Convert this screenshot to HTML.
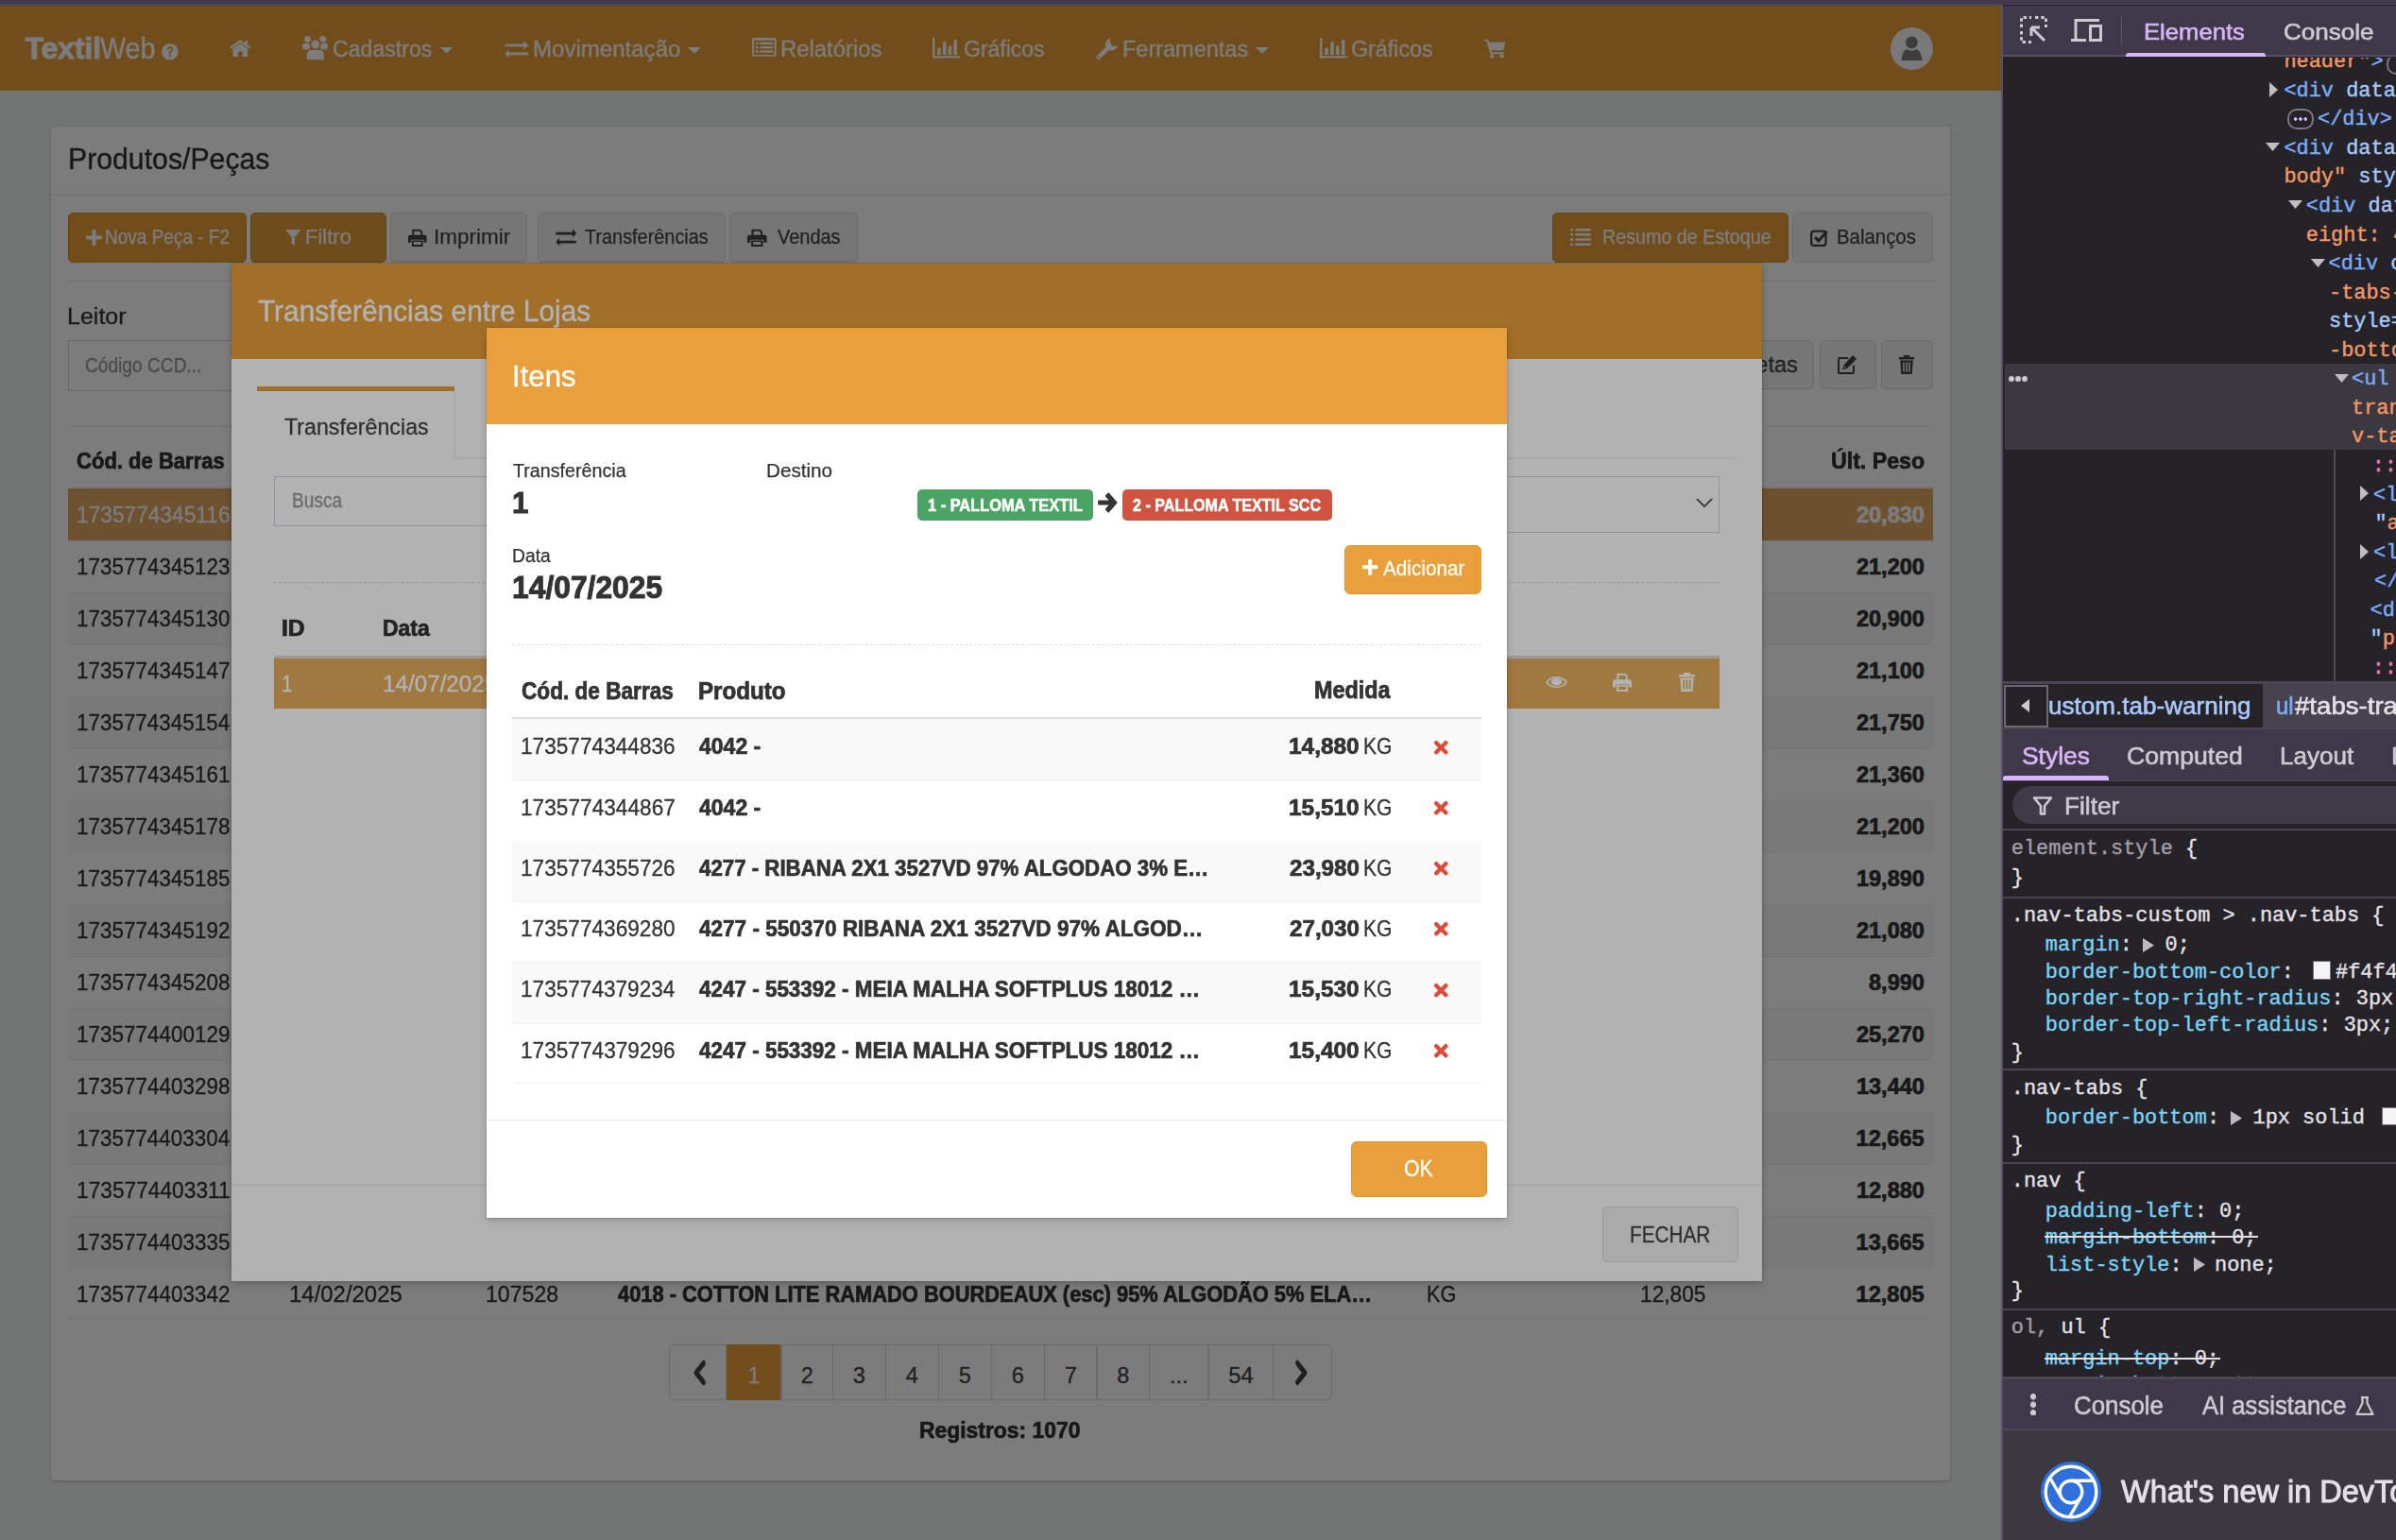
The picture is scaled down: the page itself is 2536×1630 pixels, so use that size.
<!DOCTYPE html>
<html><head><meta charset="utf-8"><style>
html,body{margin:0;padding:0;width:2536px;height:1630px;overflow:hidden;background:#262429;}
.t{position:absolute;white-space:pre;}
.m{position:absolute;white-space:pre;font-family:'Liberation Mono',monospace;font-size:21.93px;line-height:22px;-webkit-text-stroke:0.4px currentColor;}
svg{position:absolute;overflow:visible;}

</style></head><body>
<div style="position:absolute;left:0;top:0;width:2118px;height:1630px;overflow:hidden;background:#edeef0;">
<div style="position:absolute;left:0px;top:6px;width:2118px;height:90px;background:#e9a03c;"></div>
<div class="t" style="left:26.74px;top:35.67px;font-size:31.69px;line-height:31.69px;font-family:'Liberation Sans', sans-serif;font-weight:700;color:#fff;-webkit-text-stroke:0.95px #fff;">Textil</div>
<div class="t" style="left:105.87px;top:35.67px;font-size:31.69px;line-height:31.69px;font-family:'Liberation Sans', sans-serif;font-weight:400;color:#fff;transform:scaleX(0.9046);transform-origin:0 0;-webkit-text-stroke:0.38px #fff;">Web</div>
<svg style="left:171px;top:45.8px;" width="17.7" height="17.6" viewBox="0 0 100 100" preserveAspectRatio="none" fill="#fff"><circle cx="50" cy="50" r="50"/><path d="M34 38Q34 18 52 18Q70 18 70 36Q70 46 58 52Q55 54 55 62H44Q44 48 54 43Q60 40 60 36Q60 28 52 28Q44 28 44 38Z" fill="#e9a03c"/><rect x="44" y="68" width="12" height="12" fill="#e9a03c"/></svg>
<svg style="left:242.8px;top:42px;" width="22.7" height="18" viewBox="0 0 100 100" preserveAspectRatio="none" fill="#fff"><path d="M50 0L100 45L92 54L50 16L8 54L0 45Z"/><path d="M16 52L50 22L84 52V100H60V70H40V100H16Z"/><rect x="72" y="6" width="12" height="26"/></svg>
<svg style="left:320px;top:38.2px;" width="27" height="25.4" viewBox="0 0 100 100" preserveAspectRatio="none" fill="#fff"><rect x="0.4" y="30.7" width="29.6" height="26.3" rx="11"/><rect x="70" y="30.7" width="29.3" height="26.3" rx="11"/><ellipse cx="20.4" cy="13.6" rx="12.6" ry="13.4"/><ellipse cx="80.7" cy="13.6" rx="12.6" ry="13.4"/><path d="M15.2 102V78Q15.2 56 37 56H65Q87 56 87 78V102Z" stroke="#e9a03c" stroke-width="5"/><ellipse cx="51.1" cy="35.8" rx="19.5" ry="20.7" stroke="#e9a03c" stroke-width="6"/></svg>
<div class="t" style="left:352.33px;top:39.72px;font-size:24.42px;line-height:24.42px;font-family:'Liberation Sans', sans-serif;font-weight:400;color:#fff;transform:scaleX(0.9467);transform-origin:0 0;-webkit-text-stroke:0.29px #fff;">Cadastros</div>
<svg style="left:466.3px;top:49.9px;" width="13.2" height="6.8" viewBox="0 0 100 100" preserveAspectRatio="none" fill="#fff"><path d="M0 0H100L50 100Z"/></svg>
<svg style="left:533.8px;top:42.5px;" width="25.3" height="18.7" viewBox="0 0 100 100" preserveAspectRatio="none" fill="#fff"><path d="M1.6 19.3H80.6V0L100 26.2L80.6 49.7V33.7H1.6Z"/><path d="M98.4 67.4H19V49.7L1.6 74.3L19 98.4V81.8H98.4Z"/></svg>
<div class="t" style="left:563.53px;top:39.72px;font-size:24.42px;line-height:24.42px;font-family:'Liberation Sans', sans-serif;font-weight:400;color:#fff;transform:scaleX(0.9853);transform-origin:0 0;-webkit-text-stroke:0.29px #fff;">Movimentação</div>
<svg style="left:728px;top:49.5px;" width="13.7" height="7.1" viewBox="0 0 100 100" preserveAspectRatio="none" fill="#fff"><path d="M0 0H100L50 100Z"/></svg>
<svg style="left:796px;top:40.1px;" width="25.6" height="19.65" viewBox="0 0 100 100" preserveAspectRatio="none" fill="#fff"><path d="M0 8Q0 0 8 0H92Q100 0 100 8V92Q100 100 92 100H8Q0 100 0 92Z M8 14V92H92V14Z" fill-rule="evenodd"/><rect x="14" y="24" width="12" height="12"/><rect x="32" y="24" width="54" height="12"/><rect x="14" y="46" width="12" height="12"/><rect x="32" y="46" width="54" height="12"/><rect x="14" y="68" width="12" height="12"/><rect x="32" y="68" width="54" height="12"/></svg>
<div class="t" style="left:825.64px;top:39.72px;font-size:24.42px;line-height:24.42px;font-family:'Liberation Sans', sans-serif;font-weight:400;color:#fff;transform:scaleX(0.9785);transform-origin:0 0;-webkit-text-stroke:0.29px #fff;">Relatórios</div>
<svg style="left:986.6px;top:40.1px;" width="28.8" height="21.4" viewBox="0 0 100 100" preserveAspectRatio="none" fill="#fff"><rect x="0" y="0" width="8" height="100"/><rect x="0" y="90" width="100" height="10"/><rect x="18" y="50" width="12" height="34"/><rect x="38" y="20" width="12" height="64"/><rect x="58" y="40" width="12" height="44"/><rect x="78" y="10" width="12" height="74"/></svg>
<div class="t" style="left:1020.14px;top:39.72px;font-size:24.42px;line-height:24.42px;font-family:'Liberation Sans', sans-serif;font-weight:400;color:#fff;transform:scaleX(0.9418);transform-origin:0 0;-webkit-text-stroke:0.29px #fff;">Gráficos</div>
<svg style="left:1159.6px;top:40.1px;" width="23.5" height="23.3" viewBox="0 0 100 100" preserveAspectRatio="none" fill="#fff"><defs><mask id="wm"><rect x="0" y="0" width="100" height="100" fill="#fff"/><path d="M70 -10L110 -10L110 30L80 40L62 22Z" fill="#000"/></mask></defs><g mask="url(#wm)"><circle cx="70" cy="30" r="28"/></g><path d="M12 88L58 42" stroke="#fff" stroke-width="20" stroke-linecap="round"/><circle cx="13" cy="87" r="4" fill="#e9a03c"/></svg>
<div class="t" style="left:1187.57px;top:39.72px;font-size:24.42px;line-height:24.42px;font-family:'Liberation Sans', sans-serif;font-weight:400;color:#fff;transform:scaleX(0.9625);transform-origin:0 0;-webkit-text-stroke:0.29px #fff;">Ferramentas</div>
<svg style="left:1328.7px;top:49.5px;" width="13.9" height="7.1" viewBox="0 0 100 100" preserveAspectRatio="none" fill="#fff"><path d="M0 0H100L50 100Z"/></svg>
<svg style="left:1396.8px;top:40.1px;" width="29.4" height="21.4" viewBox="0 0 100 100" preserveAspectRatio="none" fill="#fff"><rect x="0" y="0" width="8" height="100"/><rect x="0" y="90" width="100" height="10"/><rect x="18" y="50" width="12" height="34"/><rect x="38" y="20" width="12" height="64"/><rect x="58" y="40" width="12" height="44"/><rect x="78" y="10" width="12" height="74"/></svg>
<div class="t" style="left:1430.33px;top:39.72px;font-size:24.42px;line-height:24.42px;font-family:'Liberation Sans', sans-serif;font-weight:400;color:#fff;transform:scaleX(0.9542);transform-origin:0 0;-webkit-text-stroke:0.29px #fff;">Gráficos</div>
<svg style="left:1571px;top:42px;" width="22.7" height="19.5" viewBox="0 0 100 100" preserveAspectRatio="none" fill="#fff"><path d="M0 0H18L24 14H100L88 58H32L36 68H92V78H28L10 8H0Z"/><circle cx="36" cy="90" r="10"/><circle cx="82" cy="90" r="10"/></svg>
<svg style="left:2001px;top:29px" width="45" height="45" viewBox="0 0 45 45"><circle cx="22.5" cy="22.5" r="22.5" fill="#fafafa"/><path d="M11.4 34.9C12 29 14 24.5 17 23.1Q22.4 26.5 27.8 23.1C31 24.5 33 29 33.7 34.9Z" fill="#847c82"/><circle cx="22.4" cy="15.9" r="7.6" fill="#fafafa"/><circle cx="22.4" cy="15.9" r="6.4" fill="#847c82"/></svg>
<div style="position:absolute;left:54px;top:134px;width:2010px;height:1433px;background:#fff;border-radius:4px;box-shadow:0 1px 3px rgba(0,0,0,0.22);"></div>
<div style="position:absolute;left:54px;top:205px;width:2010px;height:2px;background:#f4f4f4;"></div>
<div class="t" style="left:72.02px;top:152.79px;font-size:31.54px;line-height:31.54px;font-family:'Liberation Sans', sans-serif;font-weight:400;color:#333;transform:scaleX(0.9590);transform-origin:0 0;-webkit-text-stroke:0.38px #333;">Produtos/Peças</div>
<div style="position:absolute;left:72px;top:225px;width:189px;height:53px;background:#e9a03c;box-sizing:border-box;border:1.5px solid #d9902c;border-radius:5px;"></div>
<svg style="left:90.7px;top:242.5px;" width="16.9" height="17" viewBox="0 0 100 100" preserveAspectRatio="none" fill="#fff"><rect x="38" y="0" width="24" height="100" rx="4"/><rect x="0" y="38" width="100" height="24" rx="4"/></svg>
<div class="t" style="left:110.94px;top:240.43px;font-size:21.22px;line-height:21.22px;font-family:'Liberation Sans', sans-serif;font-weight:400;color:#fff;transform:scaleX(0.8955);transform-origin:0 0;-webkit-text-stroke:0.25px #fff;">Nova Peça - F2</div>
<div style="position:absolute;left:265px;top:225px;width:144px;height:53px;background:#e59c38;box-sizing:border-box;border:1.5px solid #cf8c2c;border-radius:5px;"></div>
<svg style="left:302px;top:243px;" width="16.7" height="17" viewBox="0 0 100 100" preserveAspectRatio="none" fill="#fff"><path d="M0 0H100L60 48V100L40 85V48Z"/></svg>
<div class="t" style="left:322.59px;top:240.43px;font-size:21.22px;line-height:21.22px;font-family:'Liberation Sans', sans-serif;font-weight:400;color:#fff;transform:scaleX(1.0376);transform-origin:0 0;-webkit-text-stroke:0.25px #fff;">Filtro</div>
<div style="position:absolute;left:413px;top:225px;width:145px;height:53px;background:#f4f4f4;box-sizing:border-box;border:1.5px solid #ddd;border-radius:5px;"></div>
<svg style="left:431.8px;top:242px;" width="19.5" height="19" viewBox="0 0 100 100" preserveAspectRatio="none" fill="#444"><path d="M22 4H66L78 16V40H68V20L62 14H32V40H22Z"/><path d="M0 46Q0 36 10 36H90Q100 36 100 46V78H84V62H16V78H0Z"/><path d="M20 66H80V100H20Z M30 74V90H70V74Z" fill-rule="evenodd"/></svg>
<div class="t" style="left:458.62px;top:240.43px;font-size:21.22px;line-height:21.22px;font-family:'Liberation Sans', sans-serif;font-weight:400;color:#444;transform:scaleX(1.0619);transform-origin:0 0;-webkit-text-stroke:0.25px #444;">Imprimir</div>
<div style="position:absolute;left:569px;top:225px;width:199px;height:53px;background:#f4f4f4;box-sizing:border-box;border:1.5px solid #ddd;border-radius:5px;"></div>
<svg style="left:587.7px;top:242px;" width="22.2" height="19" viewBox="0 0 100 100" preserveAspectRatio="none" fill="#444"><path d="M1.6 19.3H80.6V0L100 26.2L80.6 49.7V33.7H1.6Z"/><path d="M98.4 67.4H19V49.7L1.6 74.3L19 98.4V81.8H98.4Z"/></svg>
<div class="t" style="left:619.15px;top:240.43px;font-size:21.22px;line-height:21.22px;font-family:'Liberation Sans', sans-serif;font-weight:400;color:#444;transform:scaleX(0.9370);transform-origin:0 0;-webkit-text-stroke:0.25px #444;">Transferências</div>
<div style="position:absolute;left:772px;top:225px;width:136px;height:53px;background:#f4f4f4;box-sizing:border-box;border:1.5px solid #ddd;border-radius:5px;"></div>
<svg style="left:790.6px;top:242px;" width="20.6" height="19" viewBox="0 0 100 100" preserveAspectRatio="none" fill="#444"><path d="M22 4H66L78 16V40H68V20L62 14H32V40H22Z"/><path d="M0 46Q0 36 10 36H90Q100 36 100 46V78H84V62H16V78H0Z"/><path d="M20 66H80V100H20Z M30 74V90H70V74Z" fill-rule="evenodd"/></svg>
<div class="t" style="left:823.11px;top:240.43px;font-size:21.22px;line-height:21.22px;font-family:'Liberation Sans', sans-serif;font-weight:400;color:#444;transform:scaleX(0.9408);transform-origin:0 0;-webkit-text-stroke:0.25px #444;">Vendas</div>
<div style="position:absolute;left:1643px;top:225px;width:250px;height:53px;background:#e9a03c;box-sizing:border-box;border:1.5px solid #d9902c;border-radius:5px;"></div>
<svg style="left:1662.2px;top:242px;" width="21.8" height="18" viewBox="0 0 100 100" preserveAspectRatio="none" fill="#fff"><rect x="0" y="0" width="14" height="14"/><rect x="24" y="0" width="76" height="14"/><rect x="0" y="28" width="14" height="14"/><rect x="24" y="28" width="76" height="14"/><rect x="0" y="57" width="14" height="14"/><rect x="24" y="57" width="76" height="14"/><rect x="0" y="86" width="14" height="14"/><rect x="24" y="86" width="76" height="14"/></svg>
<div class="t" style="left:1696.28px;top:240.43px;font-size:21.22px;line-height:21.22px;font-family:'Liberation Sans', sans-serif;font-weight:400;color:#fff;transform:scaleX(0.9289);transform-origin:0 0;-webkit-text-stroke:0.25px #fff;">Resumo de Estoque</div>
<div style="position:absolute;left:1897px;top:225px;width:149px;height:53px;background:#f4f4f4;box-sizing:border-box;border:1.5px solid #ddd;border-radius:5px;"></div>
<svg style="left:1915.8px;top:242px;" width="19.2" height="19" viewBox="0 0 100 100" preserveAspectRatio="none" fill="#444"><rect x="6" y="14" width="80" height="80" rx="14" fill="none" stroke="#444" stroke-width="12"/><path d="M26 48L46 68L92 14" fill="none" stroke="#444" stroke-width="16" stroke-linejoin="miter"/></svg>
<div class="t" style="left:1943.63px;top:240.43px;font-size:21.22px;line-height:21.22px;font-family:'Liberation Sans', sans-serif;font-weight:400;color:#444;transform:scaleX(0.9612);transform-origin:0 0;-webkit-text-stroke:0.25px #444;">Balanços</div>
<div style="position:absolute;left:72px;top:296px;width:1974px;height:1.5px;background:#f4f4f4;"></div>
<div class="t" style="left:70.95px;top:322.69px;font-size:23.98px;line-height:23.98px;font-family:'Liberation Sans', sans-serif;font-weight:400;color:#333;transform:scaleX(1.0444);transform-origin:0 0;-webkit-text-stroke:0.29px #333;">Leitor</div>
<div style="position:absolute;left:72px;top:360px;width:1428px;height:54px;background:#fff;box-sizing:border-box;border:1.5px solid #d2d6de;"></div>
<div class="t" style="left:90.03px;top:375.48px;font-size:22.82px;line-height:22.82px;font-family:'Liberation Sans', sans-serif;font-weight:400;color:#999;transform:scaleX(0.8392);transform-origin:0 0;-webkit-text-stroke:0.27px #999;">Código CCD...</div>
<div style="position:absolute;left:1700px;top:360px;width:220px;height:51.5px;background:#f4f4f4;box-sizing:border-box;border:1.5px solid #ddd;border-radius:5px;"></div>
<div class="t" style="left:1804.66px;top:374.66px;font-size:23.55px;line-height:23.55px;font-family:'Liberation Sans', sans-serif;font-weight:400;color:#444;-webkit-text-stroke:0.28px #444;">Etiquetas</div>
<div style="position:absolute;left:1926px;top:360px;width:59.5px;height:51.5px;background:#f4f4f4;box-sizing:border-box;border:1.5px solid #ddd;border-radius:5px;"></div>
<svg style="left:1945px;top:376px;" width="20" height="20" viewBox="0 0 100 100" preserveAspectRatio="none" fill="#444"><path d="M0 20Q0 10 10 10H56V20H10V90H80V54H90V90Q90 100 80 100H10Q0 100 0 90Z"/><path d="M80 0L100 20L50 70L26 76L32 52Z M36 56L32 68L44 64Z" fill-rule="evenodd"/></svg>
<div style="position:absolute;left:1991px;top:360px;width:54.5px;height:51.5px;background:#f4f4f4;box-sizing:border-box;border:1.5px solid #ddd;border-radius:5px;"></div>
<svg style="left:2010px;top:376px;" width="16" height="20" viewBox="0 0 100 100" preserveAspectRatio="none" fill="#444"><path d="M30 0H70V10H100V22H0V10H30Z"/><path d="M8 28H92L86 100H14Z M26 38V88H36V38Z M45 38V88H55V38Z M64 38V88H74V38Z" fill-rule="evenodd"/></svg>
<div style="position:absolute;left:72px;top:450px;width:1974px;height:1.5px;background:#f4f4f4;"></div>
<div class="t" style="left:80.90px;top:476.08px;font-size:24.71px;line-height:24.71px;font-family:'Liberation Sans', sans-serif;font-weight:700;color:#333;transform:scaleX(0.8923);transform-origin:0 0;-webkit-text-stroke:0.74px #333;">Cód. de Barras</div>
<div class="t" style="left:1937.81px;top:476.08px;font-size:24.71px;line-height:24.71px;font-family:'Liberation Sans', sans-serif;font-weight:700;color:#333;transform:scaleX(0.9375);transform-origin:0 0;-webkit-text-stroke:0.74px #333;">Últ. Peso</div>
<div style="position:absolute;left:72px;top:515px;width:1974px;height:2px;background:#f4f4f4;"></div>
<div style="position:absolute;left:72px;top:517px;width:1974px;height:55px;background:#e2a762;"></div>
<div class="t" style="left:80.97px;top:534.16px;font-size:23.55px;line-height:23.55px;font-family:'Liberation Sans', sans-serif;font-weight:400;color:#fff;transform:scaleX(0.9646);transform-origin:0 0;-webkit-text-stroke:0.28px #fff;">1735774345116</div>
<div class="t" style="left:1964.93px;top:534.16px;font-size:23.55px;line-height:23.55px;font-family:'Liberation Sans', sans-serif;font-weight:700;color:#fff;-webkit-text-stroke:0.71px #fff;">20,830</div>
<div style="position:absolute;left:72px;top:572px;width:1974px;height:1px;background:#f4f4f4;"></div>
<div class="t" style="left:80.99px;top:589.16px;font-size:23.55px;line-height:23.55px;font-family:'Liberation Sans', sans-serif;font-weight:400;color:#333;transform:scaleX(0.9545);transform-origin:0 0;-webkit-text-stroke:0.28px #333;">1735774345123</div>
<div class="t" style="left:1964.93px;top:589.16px;font-size:23.55px;line-height:23.55px;font-family:'Liberation Sans', sans-serif;font-weight:700;color:#333;-webkit-text-stroke:0.71px #333;">21,200</div>
<div style="position:absolute;left:72px;top:627px;width:1974px;height:55px;background:#f9f9f9;"></div>
<div style="position:absolute;left:72px;top:627px;width:1974px;height:1px;background:#f4f4f4;"></div>
<div class="t" style="left:80.99px;top:644.16px;font-size:23.55px;line-height:23.55px;font-family:'Liberation Sans', sans-serif;font-weight:400;color:#333;transform:scaleX(0.9538);transform-origin:0 0;-webkit-text-stroke:0.28px #333;">1735774345130</div>
<div class="t" style="left:1964.93px;top:644.16px;font-size:23.55px;line-height:23.55px;font-family:'Liberation Sans', sans-serif;font-weight:700;color:#333;-webkit-text-stroke:0.71px #333;">20,900</div>
<div style="position:absolute;left:72px;top:682px;width:1974px;height:1px;background:#f4f4f4;"></div>
<div class="t" style="left:80.99px;top:699.16px;font-size:23.55px;line-height:23.55px;font-family:'Liberation Sans', sans-serif;font-weight:400;color:#333;transform:scaleX(0.9553);transform-origin:0 0;-webkit-text-stroke:0.28px #333;">1735774345147</div>
<div class="t" style="left:1964.93px;top:699.16px;font-size:23.55px;line-height:23.55px;font-family:'Liberation Sans', sans-serif;font-weight:700;color:#333;-webkit-text-stroke:0.71px #333;">21,100</div>
<div style="position:absolute;left:72px;top:737px;width:1974px;height:55px;background:#f9f9f9;"></div>
<div style="position:absolute;left:72px;top:737px;width:1974px;height:1px;background:#f4f4f4;"></div>
<div class="t" style="left:80.99px;top:754.16px;font-size:23.55px;line-height:23.55px;font-family:'Liberation Sans', sans-serif;font-weight:400;color:#333;transform:scaleX(0.9525);transform-origin:0 0;-webkit-text-stroke:0.28px #333;">1735774345154</div>
<div class="t" style="left:1964.93px;top:754.16px;font-size:23.55px;line-height:23.55px;font-family:'Liberation Sans', sans-serif;font-weight:700;color:#333;-webkit-text-stroke:0.71px #333;">21,750</div>
<div style="position:absolute;left:72px;top:792px;width:1974px;height:1px;background:#f4f4f4;"></div>
<div class="t" style="left:80.99px;top:809.16px;font-size:23.55px;line-height:23.55px;font-family:'Liberation Sans', sans-serif;font-weight:400;color:#333;transform:scaleX(0.9551);transform-origin:0 0;-webkit-text-stroke:0.28px #333;">1735774345161</div>
<div class="t" style="left:1964.93px;top:809.16px;font-size:23.55px;line-height:23.55px;font-family:'Liberation Sans', sans-serif;font-weight:700;color:#333;-webkit-text-stroke:0.71px #333;">21,360</div>
<div style="position:absolute;left:72px;top:847px;width:1974px;height:55px;background:#f9f9f9;"></div>
<div style="position:absolute;left:72px;top:847px;width:1974px;height:1px;background:#f4f4f4;"></div>
<div class="t" style="left:80.99px;top:864.16px;font-size:23.55px;line-height:23.55px;font-family:'Liberation Sans', sans-serif;font-weight:400;color:#333;transform:scaleX(0.9544);transform-origin:0 0;-webkit-text-stroke:0.28px #333;">1735774345178</div>
<div class="t" style="left:1964.93px;top:864.16px;font-size:23.55px;line-height:23.55px;font-family:'Liberation Sans', sans-serif;font-weight:700;color:#333;-webkit-text-stroke:0.71px #333;">21,200</div>
<div style="position:absolute;left:72px;top:902px;width:1974px;height:1px;background:#f4f4f4;"></div>
<div class="t" style="left:80.99px;top:919.16px;font-size:23.55px;line-height:23.55px;font-family:'Liberation Sans', sans-serif;font-weight:400;color:#333;transform:scaleX(0.9542);transform-origin:0 0;-webkit-text-stroke:0.28px #333;">1735774345185</div>
<div class="t" style="left:1964.93px;top:919.16px;font-size:23.55px;line-height:23.55px;font-family:'Liberation Sans', sans-serif;font-weight:700;color:#333;-webkit-text-stroke:0.71px #333;">19,890</div>
<div style="position:absolute;left:72px;top:957px;width:1974px;height:55px;background:#f9f9f9;"></div>
<div style="position:absolute;left:72px;top:957px;width:1974px;height:1px;background:#f4f4f4;"></div>
<div class="t" style="left:80.99px;top:974.16px;font-size:23.55px;line-height:23.55px;font-family:'Liberation Sans', sans-serif;font-weight:400;color:#333;transform:scaleX(0.9553);transform-origin:0 0;-webkit-text-stroke:0.28px #333;">1735774345192</div>
<div class="t" style="left:1964.93px;top:974.16px;font-size:23.55px;line-height:23.55px;font-family:'Liberation Sans', sans-serif;font-weight:700;color:#333;-webkit-text-stroke:0.71px #333;">21,080</div>
<div style="position:absolute;left:72px;top:1012px;width:1974px;height:1px;background:#f4f4f4;"></div>
<div class="t" style="left:80.99px;top:1029.16px;font-size:23.55px;line-height:23.55px;font-family:'Liberation Sans', sans-serif;font-weight:400;color:#333;transform:scaleX(0.9544);transform-origin:0 0;-webkit-text-stroke:0.28px #333;">1735774345208</div>
<div class="t" style="left:1978.03px;top:1029.16px;font-size:23.55px;line-height:23.55px;font-family:'Liberation Sans', sans-serif;font-weight:700;color:#333;-webkit-text-stroke:0.71px #333;">8,990</div>
<div style="position:absolute;left:72px;top:1067px;width:1974px;height:55px;background:#f9f9f9;"></div>
<div style="position:absolute;left:72px;top:1067px;width:1974px;height:1px;background:#f4f4f4;"></div>
<div class="t" style="left:80.99px;top:1084.16px;font-size:23.55px;line-height:23.55px;font-family:'Liberation Sans', sans-serif;font-weight:400;color:#333;transform:scaleX(0.9549);transform-origin:0 0;-webkit-text-stroke:0.28px #333;">1735774400129</div>
<div class="t" style="left:1964.93px;top:1084.16px;font-size:23.55px;line-height:23.55px;font-family:'Liberation Sans', sans-serif;font-weight:700;color:#333;-webkit-text-stroke:0.71px #333;">25,270</div>
<div style="position:absolute;left:72px;top:1122px;width:1974px;height:1px;background:#f4f4f4;"></div>
<div class="t" style="left:80.99px;top:1139.16px;font-size:23.55px;line-height:23.55px;font-family:'Liberation Sans', sans-serif;font-weight:400;color:#333;transform:scaleX(0.9544);transform-origin:0 0;-webkit-text-stroke:0.28px #333;">1735774403298</div>
<div class="t" style="left:1964.93px;top:1139.16px;font-size:23.55px;line-height:23.55px;font-family:'Liberation Sans', sans-serif;font-weight:700;color:#333;-webkit-text-stroke:0.71px #333;">13,440</div>
<div style="position:absolute;left:72px;top:1177px;width:1974px;height:55px;background:#f9f9f9;"></div>
<div style="position:absolute;left:72px;top:1177px;width:1974px;height:1px;background:#f4f4f4;"></div>
<div class="t" style="left:80.99px;top:1194.16px;font-size:23.55px;line-height:23.55px;font-family:'Liberation Sans', sans-serif;font-weight:400;color:#333;transform:scaleX(0.9525);transform-origin:0 0;-webkit-text-stroke:0.28px #333;">1735774403304</div>
<div class="t" style="left:1964.62px;top:1194.16px;font-size:23.55px;line-height:23.55px;font-family:'Liberation Sans', sans-serif;font-weight:700;color:#333;-webkit-text-stroke:0.71px #333;">12,665</div>
<div style="position:absolute;left:72px;top:1232px;width:1974px;height:1px;background:#f4f4f4;"></div>
<div class="t" style="left:80.97px;top:1249.16px;font-size:23.55px;line-height:23.55px;font-family:'Liberation Sans', sans-serif;font-weight:400;color:#333;transform:scaleX(0.9652);transform-origin:0 0;-webkit-text-stroke:0.28px #333;">1735774403311</div>
<div class="t" style="left:1964.93px;top:1249.16px;font-size:23.55px;line-height:23.55px;font-family:'Liberation Sans', sans-serif;font-weight:700;color:#333;-webkit-text-stroke:0.71px #333;">12,880</div>
<div style="position:absolute;left:72px;top:1287px;width:1974px;height:55px;background:#f9f9f9;"></div>
<div style="position:absolute;left:72px;top:1287px;width:1974px;height:1px;background:#f4f4f4;"></div>
<div class="t" style="left:80.99px;top:1304.16px;font-size:23.55px;line-height:23.55px;font-family:'Liberation Sans', sans-serif;font-weight:400;color:#333;transform:scaleX(0.9542);transform-origin:0 0;-webkit-text-stroke:0.28px #333;">1735774403335</div>
<div class="t" style="left:1964.62px;top:1304.16px;font-size:23.55px;line-height:23.55px;font-family:'Liberation Sans', sans-serif;font-weight:700;color:#333;-webkit-text-stroke:0.71px #333;">13,665</div>
<div style="position:absolute;left:72px;top:1342px;width:1974px;height:1px;background:#f4f4f4;"></div>
<div class="t" style="left:80.99px;top:1359.16px;font-size:23.55px;line-height:23.55px;font-family:'Liberation Sans', sans-serif;font-weight:400;color:#333;transform:scaleX(0.9553);transform-origin:0 0;-webkit-text-stroke:0.28px #333;">1735774403342</div>
<div class="t" style="left:1964.62px;top:1359.16px;font-size:23.55px;line-height:23.55px;font-family:'Liberation Sans', sans-serif;font-weight:700;color:#333;-webkit-text-stroke:0.71px #333;">12,805</div>
<div class="t" style="left:306.18px;top:1359.16px;font-size:23.55px;line-height:23.55px;font-family:'Liberation Sans', sans-serif;font-weight:400;color:#333;transform:scaleX(1.0167);transform-origin:0 0;-webkit-text-stroke:0.28px #333;">14/02/2025</div>
<div class="t" style="left:513.84px;top:1359.16px;font-size:23.55px;line-height:23.55px;font-family:'Liberation Sans', sans-serif;font-weight:400;color:#333;transform:scaleX(0.9820);transform-origin:0 0;-webkit-text-stroke:0.28px #333;">107528</div>
<div class="t" style="left:654.17px;top:1359.16px;font-size:23.55px;line-height:23.55px;font-family:'Liberation Sans', sans-serif;font-weight:700;color:#333;transform:scaleX(0.9284);transform-origin:0 0;-webkit-text-stroke:0.71px #333;">4018 - COTTON LITE RAMADO BOURDEAUX (esc) 95% ALGODÃO 5% ELA…</div>
<div class="t" style="left:1510.22px;top:1359.16px;font-size:23.55px;line-height:23.55px;font-family:'Liberation Sans', sans-serif;font-weight:400;color:#333;transform:scaleX(0.9229);transform-origin:0 0;-webkit-text-stroke:0.28px #333;">KG</div>
<div class="t" style="left:1735.97px;top:1359.16px;font-size:23.55px;line-height:23.55px;font-family:'Liberation Sans', sans-serif;font-weight:400;color:#333;transform:scaleX(0.9646);transform-origin:0 0;-webkit-text-stroke:0.28px #333;">12,805</div>
<div style="position:absolute;left:72px;top:1396px;width:1974px;height:1px;background:#f4f4f4;"></div>
<div style="position:absolute;left:708px;top:1423px;width:702px;height:59px;background:#fff;box-sizing:border-box;border:1.5px solid #ddd;border-radius:6px;"></div>
<svg style="left:732px;top:1441px;" width="16" height="24" viewBox="0 0 100 100" preserveAspectRatio="none" fill="#444"><path d="M80 8L30 50L80 92" stroke="#444" stroke-width="26" stroke-linecap="round" stroke-linejoin="round" fill="none"/></svg>
<div style="position:absolute;left:768.25px;top:1423px;width:1.5px;height:59px;background:#ddd;"></div>
<div style="position:absolute;left:769px;top:1423px;width:58px;height:59px;background:#e9a03c;"></div>
<div class="t" style="left:791.45px;top:1444.66px;font-size:23.55px;line-height:23.55px;font-family:'Liberation Sans', sans-serif;font-weight:400;color:#fff;-webkit-text-stroke:0.28px #fff;">1</div>
<div style="position:absolute;left:826.25px;top:1423px;width:1.5px;height:59px;background:#ddd;"></div>
<div class="t" style="left:847.65px;top:1444.66px;font-size:23.55px;line-height:23.55px;font-family:'Liberation Sans', sans-serif;font-weight:400;color:#444;-webkit-text-stroke:0.28px #444;">2</div>
<div style="position:absolute;left:880.65px;top:1423px;width:1.5px;height:59px;background:#ddd;"></div>
<div class="t" style="left:902.80px;top:1444.66px;font-size:23.55px;line-height:23.55px;font-family:'Liberation Sans', sans-serif;font-weight:400;color:#444;-webkit-text-stroke:0.28px #444;">3</div>
<div style="position:absolute;left:936.55px;top:1423px;width:1.5px;height:59px;background:#ddd;"></div>
<div class="t" style="left:958.75px;top:1444.66px;font-size:23.55px;line-height:23.55px;font-family:'Liberation Sans', sans-serif;font-weight:400;color:#444;-webkit-text-stroke:0.28px #444;">4</div>
<div style="position:absolute;left:992.55px;top:1423px;width:1.5px;height:59px;background:#ddd;"></div>
<div class="t" style="left:1014.75px;top:1444.66px;font-size:23.55px;line-height:23.55px;font-family:'Liberation Sans', sans-serif;font-weight:400;color:#444;-webkit-text-stroke:0.28px #444;">5</div>
<div style="position:absolute;left:1048.55px;top:1423px;width:1.5px;height:59px;background:#ddd;"></div>
<div class="t" style="left:1070.75px;top:1444.66px;font-size:23.55px;line-height:23.55px;font-family:'Liberation Sans', sans-serif;font-weight:400;color:#444;-webkit-text-stroke:0.28px #444;">6</div>
<div style="position:absolute;left:1104.55px;top:1423px;width:1.5px;height:59px;background:#ddd;"></div>
<div class="t" style="left:1126.70px;top:1444.66px;font-size:23.55px;line-height:23.55px;font-family:'Liberation Sans', sans-serif;font-weight:400;color:#444;-webkit-text-stroke:0.28px #444;">7</div>
<div style="position:absolute;left:1160.45px;top:1423px;width:1.5px;height:59px;background:#ddd;"></div>
<div class="t" style="left:1182.25px;top:1444.66px;font-size:23.55px;line-height:23.55px;font-family:'Liberation Sans', sans-serif;font-weight:400;color:#444;-webkit-text-stroke:0.28px #444;">8</div>
<div style="position:absolute;left:1215.65px;top:1423px;width:1.5px;height:59px;background:#ddd;"></div>
<div class="t" style="left:1237.98px;top:1444.66px;font-size:23.55px;line-height:23.55px;font-family:'Liberation Sans', sans-serif;font-weight:400;color:#444;-webkit-text-stroke:0.28px #444;">...</div>
<div style="position:absolute;left:1278.45px;top:1423px;width:1.5px;height:59px;background:#ddd;"></div>
<div class="t" style="left:1300.30px;top:1444.66px;font-size:23.55px;line-height:23.55px;font-family:'Liberation Sans', sans-serif;font-weight:400;color:#444;-webkit-text-stroke:0.28px #444;">54</div>
<div style="position:absolute;left:1346.85px;top:1423px;width:1.5px;height:59px;background:#ddd;"></div>
<svg style="left:1370px;top:1441px;" width="16" height="24" viewBox="0 0 100 100" preserveAspectRatio="none" fill="#444"><path d="M20 8L70 50L20 92" stroke="#444" stroke-width="26" stroke-linecap="round" stroke-linejoin="round" fill="none"/></svg>
<div class="t" style="left:973.47px;top:1501.68px;font-size:24.71px;line-height:24.71px;font-family:'Liberation Sans', sans-serif;font-weight:700;color:#333;transform:scaleX(0.9265);transform-origin:0 0;-webkit-text-stroke:0.74px #333;">Registros: 1070</div>
</div>
<div style="position:absolute;left:0px;top:0px;width:2118px;height:1630px;background:rgba(0,0,0,0.3);"></div>
<div style="position:absolute;left:245px;top:279px;width:1620px;height:1077px;background:#fff;box-shadow:0 0 0 1px rgba(0,0,0,0.08), 0 3px 8px rgba(0,0,0,0.2);"></div>
<div style="position:absolute;left:245px;top:279px;width:1620px;height:101px;background:#e9a03c;"></div>
<div class="t" style="left:273.03px;top:313.33px;font-size:31.98px;line-height:31.98px;font-family:'Liberation Sans', sans-serif;font-weight:400;color:#fff;transform:scaleX(0.9334);transform-origin:0 0;-webkit-text-stroke:0.38px #fff;">Transferências entre Lojas</div>
<div style="position:absolute;left:272px;top:484px;width:1566px;height:1.5px;background:#f4f4f4;"></div>
<div style="position:absolute;left:272px;top:409px;width:209px;height:76.5px;background:#fff;"></div>
<div style="position:absolute;left:272px;top:409px;width:209px;height:5px;background:#e9a03c;"></div>
<div style="position:absolute;left:480px;top:414px;width:1.5px;height:71px;background:#f4f4f4;"></div>
<div class="t" style="left:300.88px;top:439.58px;font-size:24.71px;line-height:24.71px;font-family:'Liberation Sans', sans-serif;font-weight:400;color:#444;transform:scaleX(0.9396);transform-origin:0 0;-webkit-text-stroke:0.30px #444;">Transferências</div>
<div style="position:absolute;left:290px;top:503.5px;width:810px;height:53px;background:#fff;box-sizing:border-box;border:1.5px solid #d2d6de;"></div>
<div class="t" style="left:308.73px;top:518.28px;font-size:22.82px;line-height:22.82px;font-family:'Liberation Sans', sans-serif;font-weight:400;color:#999;transform:scaleX(0.8402);transform-origin:0 0;-webkit-text-stroke:0.27px #999;">Busca</div>
<div style="position:absolute;left:1120px;top:503.5px;width:700px;height:60.5px;background:#fff;box-sizing:border-box;border:1.5px solid #d2d6de;"></div>
<svg style="left:1796px;top:527px;" width="16" height="10" viewBox="0 0 100 100" preserveAspectRatio="none" fill="none"><path d="M0 10L50 90L100 10" stroke="#444" stroke-width="14" fill="none"/></svg>
<div style="position:absolute;left:290px;top:616px;width:1530px;height:1.5px;background:transparent;border-top:1.5px dashed #ddd;box-sizing:border-box;"></div>
<div class="t" style="left:298.35px;top:654.36px;font-size:23.55px;line-height:23.55px;font-family:'Liberation Sans', sans-serif;font-weight:700;color:#333;transform:scaleX(1.0477);transform-origin:0 0;-webkit-text-stroke:0.71px #333;">ID</div>
<div class="t" style="left:405.06px;top:654.36px;font-size:23.55px;line-height:23.55px;font-family:'Liberation Sans', sans-serif;font-weight:700;color:#333;transform:scaleX(0.9754);transform-origin:0 0;-webkit-text-stroke:0.71px #333;">Data</div>
<div style="position:absolute;left:290px;top:694.3px;width:1530px;height:2.7px;background:#ddd;"></div>
<div style="position:absolute;left:290px;top:697px;width:1530px;height:53px;background:#e5ae5e;"></div>
<div class="t" style="left:298.41px;top:712.96px;font-size:23.55px;line-height:23.55px;font-family:'Liberation Sans', sans-serif;font-weight:400;color:#fff;transform:scaleX(0.8853);transform-origin:0 0;-webkit-text-stroke:0.28px #fff;">1</div>
<div class="t" style="left:404.75px;top:712.96px;font-size:23.55px;line-height:23.55px;font-family:'Liberation Sans', sans-serif;font-weight:400;color:#fff;transform:scaleX(1.0289);transform-origin:0 0;-webkit-text-stroke:0.28px #fff;">14/07/2025</div>
<svg style="left:1636px;top:714px;" width="23" height="16" viewBox="0 0 100 100" preserveAspectRatio="none" fill="#fff"><path d="M5 50C26 6 74 6 95 50C74 94 26 94 5 50Z" fill="none" stroke="#fff" stroke-width="9"/><circle cx="50" cy="47" r="25"/></svg>
<svg style="left:1707px;top:712px;" width="20" height="20" viewBox="0 0 100 100" preserveAspectRatio="none" fill="#fff"><path d="M22 4H66L78 16V40H68V20L62 14H32V40H22Z"/><path d="M0 46Q0 36 10 36H90Q100 36 100 46V78H84V62H16V78H0Z"/><path d="M20 66H80V100H20Z M30 74V90H70V74Z" fill-rule="evenodd"/></svg>
<svg style="left:1777px;top:712px;" width="17" height="20" viewBox="0 0 100 100" preserveAspectRatio="none" fill="#fff"><path d="M30 0H70V10H100V22H0V10H30Z"/><path d="M8 28H92L86 100H14Z M26 38V88H36V38Z M45 38V88H55V38Z M64 38V88H74V38Z" fill-rule="evenodd"/></svg>
<div style="position:absolute;left:245px;top:1253.5px;width:1620px;height:1.5px;background:#e5e5e5;"></div>
<div style="position:absolute;left:1696px;top:1276.5px;width:144px;height:59.1px;background:#f4f4f4;box-sizing:border-box;border:1.5px solid #ddd;border-radius:5px;"></div>
<div class="t" style="left:1725.30px;top:1294.58px;font-size:24.71px;line-height:24.71px;font-family:'Liberation Sans', sans-serif;font-weight:400;color:#444;transform:scaleX(0.8384);transform-origin:0 0;-webkit-text-stroke:0.30px #444;">FECHAR</div>
<div style="position:absolute;left:0px;top:0px;width:2118px;height:1630px;background:rgba(0,0,0,0.3);"></div>
<div style="position:absolute;left:515px;top:347px;width:1080px;height:942px;background:#fff;box-shadow:0 0 0 1px rgba(0,0,0,0.08), 0 3px 8px rgba(0,0,0,0.2);"></div>
<div style="position:absolute;left:515px;top:347px;width:1080px;height:102px;background:#e9a03c;"></div>
<div class="t" style="left:541.62px;top:381.53px;font-size:31.98px;line-height:31.98px;font-family:'Liberation Sans', sans-serif;font-weight:400;color:#fff;transform:scaleX(0.9754);transform-origin:0 0;-webkit-text-stroke:0.38px #fff;">Itens</div>
<div class="t" style="left:542.86px;top:486.66px;font-size:21.08px;line-height:21.08px;font-family:'Liberation Sans', sans-serif;font-weight:400;color:#333;transform:scaleX(0.9340);transform-origin:0 0;-webkit-text-stroke:0.25px #333;">Transferência</div>
<div class="t" style="left:810.81px;top:486.66px;font-size:21.08px;line-height:21.08px;font-family:'Liberation Sans', sans-serif;font-weight:400;color:#333;transform:scaleX(0.9803);transform-origin:0 0;-webkit-text-stroke:0.25px #333;">Destino</div>
<div class="t" style="left:541.54px;top:515.53px;font-size:31.98px;line-height:31.98px;font-family:'Liberation Sans', sans-serif;font-weight:700;color:#333;transform:scaleX(0.9747);transform-origin:0 0;-webkit-text-stroke:0.96px #333;">1</div>
<div class="t" style="left:541.72px;top:576.51px;font-size:21.08px;line-height:21.08px;font-family:'Liberation Sans', sans-serif;font-weight:400;color:#333;transform:scaleX(0.9158);transform-origin:0 0;-webkit-text-stroke:0.25px #333;">Data</div>
<div class="t" style="left:541.70px;top:604.79px;font-size:33.43px;line-height:33.43px;font-family:'Liberation Sans', sans-serif;font-weight:700;color:#333;transform:scaleX(0.9516);transform-origin:0 0;-webkit-text-stroke:1.00px #333;">14/07/2025</div>
<div style="position:absolute;left:971px;top:518px;width:186px;height:33px;background:#4aa463;border-radius:5px;"></div>
<div class="t" style="left:981.57px;top:525.80px;font-size:18.90px;line-height:18.90px;font-family:'Liberation Sans', sans-serif;font-weight:700;color:#fff;transform:scaleX(0.8668);transform-origin:0 0;-webkit-text-stroke:0.57px #fff;">1 - PALLOMA TEXTIL</div>
<svg style="left:1162px;top:521px;" width="20" height="22" viewBox="0 0 100 100" preserveAspectRatio="none" fill="#333"><path d="M4 42H66L42 18L56 4L100 50L56 96L42 82L66 58H4Z" stroke="#333" stroke-width="6" stroke-linejoin="round"/></svg>
<div style="position:absolute;left:1188px;top:518px;width:222px;height:33px;background:#d05440;border-radius:5px;"></div>
<div class="t" style="left:1199.04px;top:525.80px;font-size:18.90px;line-height:18.90px;font-family:'Liberation Sans', sans-serif;font-weight:700;color:#fff;transform:scaleX(0.8516);transform-origin:0 0;-webkit-text-stroke:0.57px #fff;">2 - PALLOMA TEXTIL SCC</div>
<div style="position:absolute;left:1423px;top:576.5px;width:145px;height:52px;background:#e9a03c;border-radius:6px;box-sizing:border-box;border:1.5px solid #e0962f;"></div>
<svg style="left:1442.4px;top:592px;" width="16.3" height="16.7" viewBox="0 0 100 100" preserveAspectRatio="none" fill="#fff"><rect x="38" y="0" width="24" height="100" rx="4"/><rect x="0" y="38" width="100" height="24" rx="4"/></svg>
<div class="t" style="left:1463.56px;top:591.14px;font-size:21.80px;line-height:21.80px;font-family:'Liberation Sans', sans-serif;font-weight:400;color:#fff;transform:scaleX(0.9506);transform-origin:0 0;-webkit-text-stroke:0.26px #fff;">Adicionar</div>
<div style="position:absolute;left:542px;top:681.5px;width:1026px;height:1.5px;background:transparent;border-top:1.5px dashed #ddd;box-sizing:border-box;"></div>
<div class="t" style="left:551.67px;top:718.51px;font-size:25.15px;line-height:25.15px;font-family:'Liberation Sans', sans-serif;font-weight:700;color:#333;transform:scaleX(0.8994);transform-origin:0 0;-webkit-text-stroke:0.75px #333;">Cód. de Barras</div>
<div class="t" style="left:739.38px;top:718.51px;font-size:25.15px;line-height:25.15px;font-family:'Liberation Sans', sans-serif;font-weight:700;color:#333;transform:scaleX(0.9606);transform-origin:0 0;-webkit-text-stroke:0.75px #333;">Produto</div>
<div class="t" style="left:1391.33px;top:718.41px;font-size:25.15px;line-height:25.15px;font-family:'Liberation Sans', sans-serif;font-weight:700;color:#333;transform:scaleX(0.9308);transform-origin:0 0;-webkit-text-stroke:0.75px #333;">Medida</div>
<div style="position:absolute;left:542px;top:759.2px;width:1026px;height:2px;background:#ddd;"></div>
<div style="position:absolute;left:542px;top:761.2px;width:1026px;height:64.25px;background:#f9f9f9;"></div>
<div class="t" style="left:550.87px;top:778.49px;font-size:23.98px;line-height:23.98px;font-family:'Liberation Sans', sans-serif;font-weight:400;color:#333;transform:scaleX(0.9447);transform-origin:0 0;-webkit-text-stroke:0.29px #333;">1735774344836</div>
<div class="t" style="left:740.15px;top:778.49px;font-size:23.98px;line-height:23.98px;font-family:'Liberation Sans', sans-serif;font-weight:700;color:#333;transform:scaleX(0.9603);transform-origin:0 0;-webkit-text-stroke:0.72px #333;">4042 -</div>
<div class="t" style="left:1363.96px;top:778.49px;font-size:23.98px;line-height:23.98px;font-family:'Liberation Sans', sans-serif;font-weight:700;color:#333;transform:scaleX(1.0181);transform-origin:0 0;-webkit-text-stroke:0.72px #333;">14,880</div>
<div class="t" style="left:1443.27px;top:778.49px;font-size:23.98px;line-height:23.98px;font-family:'Liberation Sans', sans-serif;font-weight:400;color:#333;transform:scaleX(0.8775);transform-origin:0 0;-webkit-text-stroke:0.29px #333;">KG</div>
<svg style="left:1518px;top:783.7px;" width="14.5" height="14.5" viewBox="0 0 100 100" preserveAspectRatio="none" fill="#dd4b39"><path d="M15 15L85 85M85 15L15 85" stroke="#dd4b39" stroke-width="30" stroke-linecap="round" fill="none"/></svg>
<div style="position:absolute;left:542px;top:825.45px;width:1026px;height:1.5px;background:#f4f4f4;"></div>
<div class="t" style="left:550.87px;top:842.74px;font-size:23.98px;line-height:23.98px;font-family:'Liberation Sans', sans-serif;font-weight:400;color:#333;transform:scaleX(0.9456);transform-origin:0 0;-webkit-text-stroke:0.29px #333;">1735774344867</div>
<div class="t" style="left:740.15px;top:842.74px;font-size:23.98px;line-height:23.98px;font-family:'Liberation Sans', sans-serif;font-weight:700;color:#333;transform:scaleX(0.9603);transform-origin:0 0;-webkit-text-stroke:0.72px #333;">4042 -</div>
<div class="t" style="left:1363.96px;top:842.74px;font-size:23.98px;line-height:23.98px;font-family:'Liberation Sans', sans-serif;font-weight:700;color:#333;transform:scaleX(1.0181);transform-origin:0 0;-webkit-text-stroke:0.72px #333;">15,510</div>
<div class="t" style="left:1443.27px;top:842.74px;font-size:23.98px;line-height:23.98px;font-family:'Liberation Sans', sans-serif;font-weight:400;color:#333;transform:scaleX(0.8775);transform-origin:0 0;-webkit-text-stroke:0.29px #333;">KG</div>
<svg style="left:1518px;top:847.95px;" width="14.5" height="14.5" viewBox="0 0 100 100" preserveAspectRatio="none" fill="#dd4b39"><path d="M15 15L85 85M85 15L15 85" stroke="#dd4b39" stroke-width="30" stroke-linecap="round" fill="none"/></svg>
<div style="position:absolute;left:542px;top:889.7px;width:1026px;height:64.25px;background:#f9f9f9;"></div>
<div style="position:absolute;left:542px;top:889.7px;width:1026px;height:1.5px;background:#f4f4f4;"></div>
<div class="t" style="left:550.87px;top:906.99px;font-size:23.98px;line-height:23.98px;font-family:'Liberation Sans', sans-serif;font-weight:400;color:#333;transform:scaleX(0.9447);transform-origin:0 0;-webkit-text-stroke:0.29px #333;">1735774355726</div>
<div class="t" style="left:740.16px;top:906.99px;font-size:23.98px;line-height:23.98px;font-family:'Liberation Sans', sans-serif;font-weight:700;color:#333;transform:scaleX(0.9292);transform-origin:0 0;-webkit-text-stroke:0.72px #333;">4277 - RIBANA 2X1 3527VD 97% ALGODAO 3% E…</div>
<div class="t" style="left:1364.66px;top:906.99px;font-size:23.98px;line-height:23.98px;font-family:'Liberation Sans', sans-serif;font-weight:700;color:#333;transform:scaleX(1.0084);transform-origin:0 0;-webkit-text-stroke:0.72px #333;">23,980</div>
<div class="t" style="left:1443.27px;top:906.99px;font-size:23.98px;line-height:23.98px;font-family:'Liberation Sans', sans-serif;font-weight:400;color:#333;transform:scaleX(0.8775);transform-origin:0 0;-webkit-text-stroke:0.29px #333;">KG</div>
<svg style="left:1518px;top:912.2px;" width="14.5" height="14.5" viewBox="0 0 100 100" preserveAspectRatio="none" fill="#dd4b39"><path d="M15 15L85 85M85 15L15 85" stroke="#dd4b39" stroke-width="30" stroke-linecap="round" fill="none"/></svg>
<div style="position:absolute;left:542px;top:953.95px;width:1026px;height:1.5px;background:#f4f4f4;"></div>
<div class="t" style="left:550.88px;top:971.24px;font-size:23.98px;line-height:23.98px;font-family:'Liberation Sans', sans-serif;font-weight:400;color:#333;transform:scaleX(0.9441);transform-origin:0 0;-webkit-text-stroke:0.29px #333;">1735774369280</div>
<div class="t" style="left:740.16px;top:971.24px;font-size:23.98px;line-height:23.98px;font-family:'Liberation Sans', sans-serif;font-weight:700;color:#333;transform:scaleX(0.9406);transform-origin:0 0;-webkit-text-stroke:0.72px #333;">4277 - 550370 RIBANA 2X1 3527VD 97% ALGOD…</div>
<div class="t" style="left:1364.66px;top:971.24px;font-size:23.98px;line-height:23.98px;font-family:'Liberation Sans', sans-serif;font-weight:700;color:#333;transform:scaleX(1.0084);transform-origin:0 0;-webkit-text-stroke:0.72px #333;">27,030</div>
<div class="t" style="left:1443.27px;top:971.24px;font-size:23.98px;line-height:23.98px;font-family:'Liberation Sans', sans-serif;font-weight:400;color:#333;transform:scaleX(0.8775);transform-origin:0 0;-webkit-text-stroke:0.29px #333;">KG</div>
<svg style="left:1518px;top:976.45px;" width="14.5" height="14.5" viewBox="0 0 100 100" preserveAspectRatio="none" fill="#dd4b39"><path d="M15 15L85 85M85 15L15 85" stroke="#dd4b39" stroke-width="30" stroke-linecap="round" fill="none"/></svg>
<div style="position:absolute;left:542px;top:1018.2px;width:1026px;height:64.25px;background:#f9f9f9;"></div>
<div style="position:absolute;left:542px;top:1018.2px;width:1026px;height:1.5px;background:#f4f4f4;"></div>
<div class="t" style="left:550.88px;top:1035.49px;font-size:23.98px;line-height:23.98px;font-family:'Liberation Sans', sans-serif;font-weight:400;color:#333;transform:scaleX(0.9428);transform-origin:0 0;-webkit-text-stroke:0.29px #333;">1735774379234</div>
<div class="t" style="left:740.16px;top:1035.49px;font-size:23.98px;line-height:23.98px;font-family:'Liberation Sans', sans-serif;font-weight:700;color:#333;transform:scaleX(0.9367);transform-origin:0 0;-webkit-text-stroke:0.72px #333;">4247 - 553392 - MEIA MALHA SOFTPLUS 18012 …</div>
<div class="t" style="left:1363.96px;top:1035.49px;font-size:23.98px;line-height:23.98px;font-family:'Liberation Sans', sans-serif;font-weight:700;color:#333;transform:scaleX(1.0181);transform-origin:0 0;-webkit-text-stroke:0.72px #333;">15,530</div>
<div class="t" style="left:1443.27px;top:1035.49px;font-size:23.98px;line-height:23.98px;font-family:'Liberation Sans', sans-serif;font-weight:400;color:#333;transform:scaleX(0.8775);transform-origin:0 0;-webkit-text-stroke:0.29px #333;">KG</div>
<svg style="left:1518px;top:1040.7px;" width="14.5" height="14.5" viewBox="0 0 100 100" preserveAspectRatio="none" fill="#dd4b39"><path d="M15 15L85 85M85 15L15 85" stroke="#dd4b39" stroke-width="30" stroke-linecap="round" fill="none"/></svg>
<div style="position:absolute;left:542px;top:1082.45px;width:1026px;height:1.5px;background:#f4f4f4;"></div>
<div class="t" style="left:550.87px;top:1099.74px;font-size:23.98px;line-height:23.98px;font-family:'Liberation Sans', sans-serif;font-weight:400;color:#333;transform:scaleX(0.9447);transform-origin:0 0;-webkit-text-stroke:0.29px #333;">1735774379296</div>
<div class="t" style="left:740.16px;top:1099.74px;font-size:23.98px;line-height:23.98px;font-family:'Liberation Sans', sans-serif;font-weight:700;color:#333;transform:scaleX(0.9367);transform-origin:0 0;-webkit-text-stroke:0.72px #333;">4247 - 553392 - MEIA MALHA SOFTPLUS 18012 …</div>
<div class="t" style="left:1363.96px;top:1099.74px;font-size:23.98px;line-height:23.98px;font-family:'Liberation Sans', sans-serif;font-weight:700;color:#333;transform:scaleX(1.0181);transform-origin:0 0;-webkit-text-stroke:0.72px #333;">15,400</div>
<div class="t" style="left:1443.27px;top:1099.74px;font-size:23.98px;line-height:23.98px;font-family:'Liberation Sans', sans-serif;font-weight:400;color:#333;transform:scaleX(0.8775);transform-origin:0 0;-webkit-text-stroke:0.29px #333;">KG</div>
<svg style="left:1518px;top:1104.95px;" width="14.5" height="14.5" viewBox="0 0 100 100" preserveAspectRatio="none" fill="#dd4b39"><path d="M15 15L85 85M85 15L15 85" stroke="#dd4b39" stroke-width="30" stroke-linecap="round" fill="none"/></svg>
<div style="position:absolute;left:542px;top:1145.5px;width:1026px;height:1.5px;background:#f4f4f4;"></div>
<div style="position:absolute;left:515px;top:1184.5px;width:1080px;height:1.5px;background:#e5e5e5;"></div>
<div style="position:absolute;left:1430px;top:1208px;width:144px;height:58.5px;background:#e9a03c;border-radius:6px;box-sizing:border-box;border:1.5px solid #e0962f;"></div>
<div class="t" style="left:1486.30px;top:1226.31px;font-size:23.26px;line-height:23.26px;font-family:'Liberation Sans', sans-serif;font-weight:400;color:#fff;transform:scaleX(0.9122);transform-origin:0 0;-webkit-text-stroke:0.28px #fff;">OK</div>
<div style="position:absolute;left:0px;top:0px;width:2536px;height:4.3px;background:#403a4c;"></div>
<div style="position:absolute;left:0px;top:4.3px;width:2536px;height:1.7px;background:#4a4755;"></div>
<div style="position:absolute;left:2118px;top:5px;width:418px;height:1625px;overflow:hidden;background:#252328">
<div style="position:absolute;left:-2118px;top:-5px;width:2536px;height:1630px">
<div style="position:absolute;left:2118px;top:0px;width:2px;height:1630px;background:#5a4f69;"></div>
<div style="position:absolute;left:2120px;top:6px;width:416px;height:51.8px;background:#3e3848;"></div>
<div style="position:absolute;left:2120px;top:57.8px;width:416px;height:2.4px;background:#574e66;"></div>
<svg style="left:2137.7px;top:17.4px" width="29" height="29" viewBox="0 0 29 29"><path d="M1.5 12V1.5H12M16 1.5H27.5V12M1.5 16V27.5H12" stroke="#cdc9d0" stroke-width="3" stroke-dasharray="3.4 2.9" fill="none"/><path d="M12 12L26 26M12 12H21M12 12V21" stroke="#cdc9d0" stroke-width="3" fill="none"/></svg>
<svg style="left:2191.8px;top:20px" width="33" height="24" viewBox="0 0 33 24"><path d="M5 22V1.5H30M0 22.5H16" stroke="#cdc9d0" stroke-width="3" fill="none"/><rect x="20.5" y="7.5" width="11" height="15" stroke="#cdc9d0" stroke-width="3" fill="none"/></svg>
<div style="position:absolute;left:2244.5px;top:16.6px;width:1.5px;height:30.9px;background:#5a5463;"></div>
<div class="t" style="left:2269.40px;top:22.38px;font-size:24.71px;line-height:24.71px;font-family:'Liberation Sans', sans-serif;font-weight:400;color:#d8b4f8;transform:scaleX(1.0373);transform-origin:0 0;-webkit-text-stroke:0.6px #d8b4f8;">Elements</div>
<div style="position:absolute;left:2250px;top:55.5px;width:148px;height:4.5px;background:#d8b4f8;border-radius:3px 3px 0 0;"></div>
<div class="t" style="left:2417.08px;top:22.38px;font-size:24.71px;line-height:24.71px;font-family:'Liberation Sans', sans-serif;font-weight:400;color:#cdc9d0;transform:scaleX(1.0534);transform-origin:0 0;-webkit-text-stroke:0.6px #cdc9d0;">Console</div>
<div style="position:absolute;left:0;top:60.5px;width:2536px;height:660.5px;overflow:hidden"><div style="position:absolute;left:0;top:-60.5px;width:2536px;height:1630px">
<div style="position:absolute;left:2122px;top:385px;width:414px;height:91.4px;background:#3b393f;"></div>
<div style="position:absolute;left:2126px;top:397.5px;width:20px;height:8px"><div style="position:absolute;left:0;top:0;width:6px;height:6px;border-radius:50%;background:#cdc9d0"></div><div style="position:absolute;left:7px;top:0;width:6px;height:6px;border-radius:50%;background:#cdc9d0"></div><div style="position:absolute;left:14px;top:0;width:6px;height:6px;border-radius:50%;background:#cdc9d0"></div></div>
<div style="position:absolute;left:2470px;top:476.4px;width:1.5px;height:244.6px;background:#4e4a55;"></div>
<div class="m" style="left:2417.40px;top:55.25px;color:#f29766">header"</div>
<div class="m" style="left:2509.52px;top:55.25px;color:#7cacf8">&gt;</div>
<div style="position:absolute;left:2526px;top:57px;width:24px;height:18px;border:2px solid #7b7680;border-radius:10px"></div>
<svg style="left:2402px;top:86.7px" width="9" height="16" viewBox="0 0 9 16"><path d="M0 0L9 8L0 16Z" fill="#c0bcc4"/></svg>
<div class="m" style="left:2417.40px;top:85.80px;color:#7cacf8">&lt;div</div>
<div class="m" style="left:2470.04px;top:85.80px;color:#a8c8fa"> data</div>
<div style="position:absolute;left:2421px;top:115px;width:24px;height:18px;border:2px solid #7b7680;border-radius:10px"><div style="position:absolute;left:4px;top:7px;width:16px;height:4px;background:radial-gradient(circle,#d8b4f8 1.6px,transparent 2px) 0 0/5.3px 4px repeat-x"></div></div>
<div class="m" style="left:2453.00px;top:116.35px;color:#7cacf8">&lt;/div&gt;</div>
<svg style="left:2398px;top:151.3px" width="15" height="9" viewBox="0 0 15 9"><path d="M0 0H15L7.5 9Z" fill="#c0bcc4"/></svg>
<div class="m" style="left:2417.40px;top:146.90px;color:#7cacf8">&lt;div</div>
<div class="m" style="left:2470.04px;top:146.90px;color:#a8c8fa"> data</div>
<div class="m" style="left:2417.40px;top:177.45px;color:#f29766">body"</div>
<div class="m" style="left:2483.20px;top:177.45px;color:#a8c8fa"> sty</div>
<svg style="left:2422px;top:212.4px" width="15" height="9" viewBox="0 0 15 9"><path d="M0 0H15L7.5 9Z" fill="#c0bcc4"/></svg>
<div class="m" style="left:2440.80px;top:208.00px;color:#7cacf8">&lt;div</div>
<div class="m" style="left:2493.44px;top:208.00px;color:#a8c8fa"> dat</div>
<div class="m" style="left:2440.80px;top:238.55px;color:#f29766">eight: 4</div>
<svg style="left:2446px;top:273.5px" width="15" height="9" viewBox="0 0 15 9"><path d="M0 0H15L7.5 9Z" fill="#c0bcc4"/></svg>
<div class="m" style="left:2464.50px;top:269.10px;color:#7cacf8">&lt;div</div>
<div class="m" style="left:2517.14px;top:269.10px;color:#a8c8fa"> c</div>
<div class="m" style="left:2465.00px;top:299.65px;color:#f29766">-tabs-</div>
<div class="m" style="left:2465.00px;top:330.20px;color:#a8c8fa">style=</div>
<div class="m" style="left:2465.00px;top:360.75px;color:#f29766">-botto</div>
<svg style="left:2470.6px;top:395.7px" width="15" height="9" viewBox="0 0 15 9"><path d="M0 0H15L7.5 9Z" fill="#c0bcc4"/></svg>
<div class="m" style="left:2489.00px;top:391.30px;color:#7cacf8">&lt;ul</div>
<div class="m" style="left:2489.00px;top:421.85px;color:#f29766">tran</div>
<div class="m" style="left:2489.00px;top:452.40px;color:#f29766">v-ta</div>
<div class="m" style="left:2510.70px;top:482.95px;color:#f27ab8">::</div>
<svg style="left:2498.4px;top:514.4px" width="9" height="16" viewBox="0 0 9 16"><path d="M0 0L9 8L0 16Z" fill="#c0bcc4"/></svg>
<div class="m" style="left:2512.00px;top:513.50px;color:#7cacf8">&lt;l</div>
<div class="m" style="left:2513.40px;top:544.05px;color:#a8c8fa">"</div>
<div class="m" style="left:2526.56px;top:544.05px;color:#f29766">a</div>
<svg style="left:2498.4px;top:575.5px" width="9" height="16" viewBox="0 0 9 16"><path d="M0 0L9 8L0 16Z" fill="#c0bcc4"/></svg>
<div class="m" style="left:2512.00px;top:574.60px;color:#7cacf8">&lt;l</div>
<div class="m" style="left:2513.00px;top:605.15px;color:#7cacf8">&lt;/</div>
<div class="m" style="left:2508.50px;top:635.70px;color:#7cacf8">&lt;d</div>
<div class="m" style="left:2508.50px;top:666.25px;color:#a8c8fa">"</div>
<div class="m" style="left:2521.66px;top:666.25px;color:#f29766">p</div>
<div class="m" style="left:2510.70px;top:696.80px;color:#f27ab8">::</div>
</div></div>
<div style="position:absolute;left:2120px;top:721px;width:416px;height:3px;background:#4a4553;"></div>
<div style="position:absolute;left:2120px;top:724px;width:416px;height:46px;background:#252328;"></div>
<div style="position:absolute;left:2395px;top:724px;width:141px;height:46px;background:#48424f;"></div>
<div style="position:absolute;left:2121px;top:725px;width:47px;height:44.5px;background:transparent;box-sizing:border-box;border:2px solid #6e6a72;"></div>
<svg style="left:2139px;top:740px" width="9" height="14" viewBox="0 0 9 14"><path d="M9 0L0 7L9 14Z" fill="#cdc9d0"/></svg>
<div class="t" style="left:2167.81px;top:734.56px;font-size:25.44px;line-height:25.44px;font-family:'Liberation Sans', sans-serif;font-weight:400;color:#a8c8fa;transform:scaleX(1.0249);transform-origin:0 0;-webkit-text-stroke:0.6px #a8c8fa;">ustom.tab-warning</div>
<div class="t" style="left:2408.94px;top:734.56px;font-size:25.44px;line-height:25.44px;font-family:'Liberation Sans', sans-serif;font-weight:400;color:#7cacf8;transform:scaleX(0.9417);transform-origin:0 0;-webkit-text-stroke:0.6px #7cacf8;">ul</div>
<div class="t" style="left:2428.88px;top:734.56px;font-size:25.44px;line-height:25.44px;font-family:'Liberation Sans', sans-serif;font-weight:400;color:#e3e0e6;transform:scaleX(1.0853);transform-origin:0 0;-webkit-text-stroke:0.6px #e3e0e6;">#tabs-transferencias</div>
<div style="position:absolute;left:2120px;top:770px;width:416px;height:1.5px;background:#4a4553;"></div>
<div style="position:absolute;left:2120px;top:771.5px;width:416px;height:54.5px;background:#3e3848;"></div>
<div class="t" style="left:2139.50px;top:788.19px;font-size:25.29px;line-height:25.29px;font-family:'Liberation Sans', sans-serif;font-weight:400;color:#d8b4f8;transform:scaleX(1.0450);transform-origin:0 0;-webkit-text-stroke:0.6px #d8b4f8;">Styles</div>
<div style="position:absolute;left:2120px;top:821.2px;width:112px;height:4.8px;background:#d8b4f8;border-radius:3px 3px 0 0;"></div>
<div class="t" style="left:2250.65px;top:788.19px;font-size:25.29px;line-height:25.29px;font-family:'Liberation Sans', sans-serif;font-weight:400;color:#cdc9d0;transform:scaleX(1.0533);transform-origin:0 0;-webkit-text-stroke:0.6px #cdc9d0;">Computed</div>
<div class="t" style="left:2413.36px;top:788.19px;font-size:25.29px;line-height:25.29px;font-family:'Liberation Sans', sans-serif;font-weight:400;color:#cdc9d0;transform:scaleX(1.0292);transform-origin:0 0;-webkit-text-stroke:0.6px #cdc9d0;">Layout</div>
<div class="t" style="left:2530.82px;top:788.19px;font-size:25.29px;line-height:25.29px;font-family:'Liberation Sans', sans-serif;font-weight:400;color:#cdc9d0;transform:scaleX(1.0509);transform-origin:0 0;-webkit-text-stroke:0.6px #cdc9d0;">Event Listeners</div>
<div style="position:absolute;left:2120px;top:825.6px;width:416px;height:1.6px;background:#4a4553;"></div>
<div style="position:absolute;left:2130px;top:831.7px;width:470px;height:40.1px;background:#3f3a48;border-radius:20px;"></div>
<svg style="left:2152px;top:843px" width="20" height="19" viewBox="0 0 20 19"><path d="M1 1.5H19L12 10V18.5H8V10Z" stroke="#cdc9d0" stroke-width="2.6" fill="none" stroke-linejoin="round"/></svg>
<div class="t" style="left:2184.85px;top:840.69px;font-size:25.29px;line-height:25.29px;font-family:'Liberation Sans', sans-serif;font-weight:400;color:#cdc9d0;transform:scaleX(1.0374);transform-origin:0 0;-webkit-text-stroke:0.6px #cdc9d0;">Filter</div>
<div style="position:absolute;left:2120px;top:877.4px;width:416px;height:2px;background:#4a4553;"></div>
<div class="m" style="left:2128.80px;top:888.10px;color:#a29ea8">element.style</div>
<div class="m" style="left:2299.88px;top:888.10px;color:#e3e0e6"> {</div>
<div class="m" style="left:2128.80px;top:918.60px;color:#e3e0e6">}</div>
<div style="position:absolute;left:2120px;top:949px;width:416px;height:2px;background:#4a4553;"></div>
<div class="m" style="left:2128.80px;top:958.80px;color:#e3e0e6">.nav-tabs-custom &gt; .nav-tabs {</div>
<div class="m" style="left:2164.80px;top:990.10px;color:#78d2f6">margin</div>
<div class="m" style="left:2243.76px;top:990.10px;color:#e3e0e6">:</div>
<svg style="left:2268.4px;top:992.7px" width="12" height="15" viewBox="0 0 12 15"><path d="M0 0L12 7.5L0 15Z" fill="#bdb9c2"/></svg>
<div class="m" style="left:2291.50px;top:990.10px;color:#e3e0e6">0;</div>
<div class="m" style="left:2164.80px;top:1019.00px;color:#78d2f6">border-bottom-color</div>
<div class="m" style="left:2414.84px;top:1019.00px;color:#e3e0e6">:</div>
<div class="m" style="left:2472.00px;top:1019.00px;color:#e3e0e6">#f4f4f4;</div>
<div style="position:absolute;left:2448px;top:1017.4px;width:19.4px;height:19.2px;background:#f4f4f4;box-sizing:border-box;border:1.5px solid #77737c;"></div>
<div class="m" style="left:2164.80px;top:1046.90px;color:#78d2f6">border-top-right-radius</div>
<div class="m" style="left:2467.48px;top:1046.90px;color:#e3e0e6">: </div>
<div class="m" style="left:2493.80px;top:1046.90px;color:#e3e0e6">3px;</div>
<div class="m" style="left:2164.80px;top:1074.80px;color:#78d2f6">border-top-left-radius</div>
<div class="m" style="left:2454.32px;top:1074.80px;color:#e3e0e6">: </div>
<div class="m" style="left:2480.64px;top:1074.80px;color:#e3e0e6">3px;</div>
<div class="m" style="left:2128.80px;top:1103.60px;color:#e3e0e6">}</div>
<div style="position:absolute;left:2120px;top:1131px;width:416px;height:2px;background:#4a4553;"></div>
<div class="m" style="left:2128.80px;top:1141.50px;color:#e3e0e6">.nav-tabs {</div>
<div class="m" style="left:2164.80px;top:1173.10px;color:#78d2f6">border-bottom</div>
<div class="m" style="left:2335.88px;top:1173.10px;color:#e3e0e6">:</div>
<svg style="left:2361.4px;top:1175.7px" width="12" height="15" viewBox="0 0 12 15"><path d="M0 0L12 7.5L0 15Z" fill="#bdb9c2"/></svg>
<div class="m" style="left:2384.50px;top:1173.10px;color:#e3e0e6">1px solid</div>
<div style="position:absolute;left:2521px;top:1172px;width:24px;height:19px;background:#f4f4f4;box-sizing:border-box;border:1.5px solid #77737c;"></div>
<div class="m" style="left:2128.80px;top:1202.10px;color:#e3e0e6">}</div>
<div style="position:absolute;left:2120px;top:1230px;width:416px;height:2px;background:#4a4553;"></div>
<div class="m" style="left:2128.80px;top:1240.10px;color:#e3e0e6">.nav {</div>
<div class="m" style="left:2164.80px;top:1272.10px;color:#78d2f6">padding-left</div>
<div class="m" style="left:2322.72px;top:1272.10px;color:#e3e0e6">: </div>
<div class="m" style="left:2349.04px;top:1272.10px;color:#e3e0e6">0;</div>
<div class="m" style="left:2164.80px;top:1299.60px;color:#78d2f6">margin-bottom</div>
<div class="m" style="left:2335.88px;top:1299.60px;color:#e3e0e6">: </div>
<div class="m" style="left:2362.20px;top:1299.60px;color:#e3e0e6">0;</div>
<div style="position:absolute;left:2163.8px;top:1308px;width:225.72px;height:2px;background:#e3e0e6;"></div>
<div class="m" style="left:2164.80px;top:1328.80px;color:#78d2f6">list-style</div>
<div class="m" style="left:2296.40px;top:1328.80px;color:#e3e0e6">:</div>
<svg style="left:2321.8px;top:1331.4px" width="12" height="15" viewBox="0 0 12 15"><path d="M0 0L12 7.5L0 15Z" fill="#bdb9c2"/></svg>
<div class="m" style="left:2344.00px;top:1328.80px;color:#e3e0e6">none;</div>
<div class="m" style="left:2128.80px;top:1356.10px;color:#e3e0e6">}</div>
<div style="position:absolute;left:2120px;top:1385px;width:416px;height:2px;background:#4a4553;"></div>
<div class="m" style="left:2128.80px;top:1395.40px;color:#a29ea8">ol, </div>
<div class="m" style="left:2181.44px;top:1395.40px;color:#e3e0e6">ul {</div>
<div class="m" style="left:2164.80px;top:1427.90px;color:#78d2f6">margin-top</div>
<div class="m" style="left:2296.40px;top:1427.90px;color:#e3e0e6">: </div>
<div class="m" style="left:2322.72px;top:1427.90px;color:#e3e0e6">0;</div>
<div style="position:absolute;left:2163.8px;top:1436.5px;width:186.24px;height:2px;background:#e3e0e6;"></div>
<div class="m" style="left:2164.80px;top:1456.10px;color:#78d2f6">margin-bottom</div>
<div class="m" style="left:2335.88px;top:1456.10px;color:#e3e0e6">: </div>
<div class="m" style="left:2362.20px;top:1456.10px;color:#e3e0e6">10px;</div>
<div style="position:absolute;left:2120px;top:1457px;width:416px;height:2.5px;background:#4a4553;"></div>
<div style="position:absolute;left:2120px;top:1459.5px;width:416px;height:52.5px;background:#3e3848;"></div>
<div style="position:absolute;left:2149px;top:1474px;width:6px;height:24px;background:radial-gradient(circle,#cdc9d0 2.9px,transparent 3.4px) 0 0/6px 8.5px repeat-y"></div>
<div class="t" style="left:2195.19px;top:1475.36px;font-size:26.74px;line-height:26.74px;font-family:'Liberation Sans', sans-serif;font-weight:400;color:#cdc9d0;transform:scaleX(0.9681);transform-origin:0 0;-webkit-text-stroke:0.6px #cdc9d0;">Console</div>
<div class="t" style="left:2330.75px;top:1475.36px;font-size:26.74px;line-height:26.74px;font-family:'Liberation Sans', sans-serif;font-weight:400;color:#cdc9d0;transform:scaleX(0.9584);transform-origin:0 0;-webkit-text-stroke:0.6px #cdc9d0;">AI assistance</div>
<svg style="left:2493px;top:1478px" width="20" height="20" viewBox="0 0 20 20"><path d="M6 1.2H14M7.5 1.2V7L1.5 18.8H18.5L12.5 7V1.2" stroke="#cdc9d0" stroke-width="2.2" fill="none" stroke-linejoin="round"/></svg>
<div style="position:absolute;left:2120px;top:1512px;width:416px;height:2px;background:#4a4553;"></div>
<div style="position:absolute;left:2120px;top:1514px;width:416px;height:116px;background:#3b393f;"></div>
<svg style="left:2160px;top:1546.5px" width="64" height="64" viewBox="0 0 64 64"><circle cx="32" cy="32" r="32" fill="#2f6fdb"/><circle cx="32" cy="32" r="26.8" fill="none" stroke="#fff" stroke-width="3.4"/><circle cx="32" cy="32" r="11.8" fill="none" stroke="#fff" stroke-width="3.4"/><path d="M32 20.2H55.5M21.8 38L10.5 18.5M42.2 38L30.5 58.5" stroke="#fff" stroke-width="3.4"/></svg>
<div class="t" style="left:2245.26px;top:1562.24px;font-size:33.14px;line-height:33.14px;font-family:'Liberation Sans', sans-serif;font-weight:400;color:#e3e0e6;transform:scaleX(0.9810);transform-origin:0 0;-webkit-text-stroke:1px #e3e0e6;">What&#x27;s new in DevTools</div>
</div></div>
</body></html>
